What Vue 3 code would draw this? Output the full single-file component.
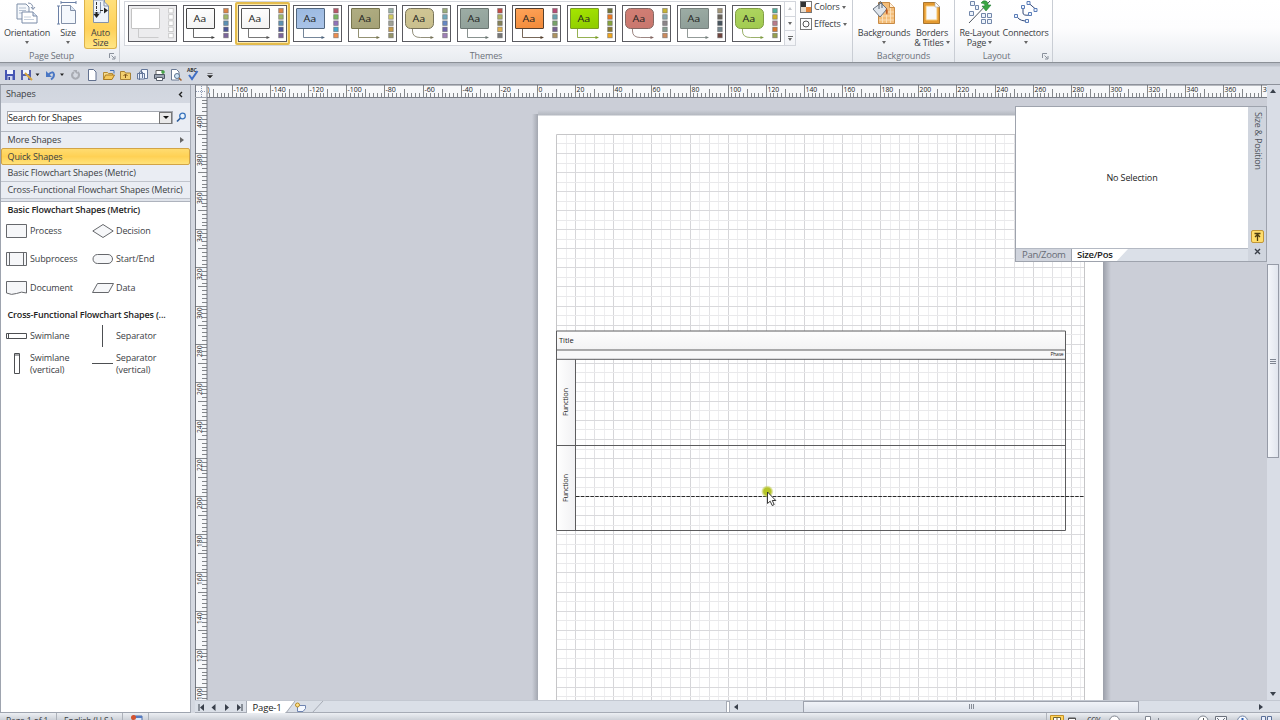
<template>
  <div class="window">
    <div class="ribbon">
      <div class="group pageSetup">
        <div class="tools">
          <div class="tool orientation">
            <svg width="22" height="26" viewBox="0 0 22 26">
              <path d="M1 4h9l3 3v12H1z" fill="#f5f8fc" stroke="#7f8fa8" />
              <path d="M3 8h7M3 10.500h7M3 13h7" stroke="#b4c0d0" />
              <path d="M6 12h11l4 4v7H6z" fill="#fff" stroke="#7a8ba8" />
              <path d="M17 12v4h4" fill="#dbe5f2" stroke="#7a8ba8" />
              <path d="M8 17h7M8 19.500h10" stroke="#c4cedc" />
              <path d="M12 3q5 0 5 6M15 7l2 2.500 2-2.500" fill="none" stroke="#8190aa" />
            </svg>
            <span>Orientation</span><i class="caret"></i>
          </div>
          <div class="tool size">
            <svg width="22" height="26" viewBox="0 0 22 26">
              <path d="M4.500 5.500h9l5 5v13h-14z" fill="#f4f8fd" stroke="#8290a8" />
              <path d="M13.500 5.500v5h5" fill="#dce6f3" stroke="#8290a8" />
              <path d="M4 2.500h15M4 1v3M19 1v3M1.500 6v18M0 6h3M0 24h3" stroke="#6b80a6" fill="none" />
            </svg>
            <span>Size</span><i class="caret"></i>
          </div>
          <div class="tool auto">
            <svg width="20" height="26" viewBox="0 0 20 26">
              <path d="M2.500 0v22.500h15V6l-4-4V0z" fill="#eef3fa" stroke="#8492aa" />
              <path d="M9.500 2v11M9.500 13H2M13 1v5h4" stroke="#8492aa" fill="none" />
              <path d="M5.500 2v9M9 10.500h7" stroke="#333" stroke-dasharray="3 1" />
              <path d="M2.500 14h6l-3 4zM13 7.500v6l4-3zM4.500 12h2v2h-2z" fill="#222" />
            </svg>
            <span>Auto</span><span>Size</span>
          </div>
        </div>
        <div class="groupName">Page Setup</div>
        <svg class="launcher" width="7" height="7"><path d="M.5 5V.5H5M2.500 2.500l3 3M6 3v3H3" fill="none" stroke="#8a919c" /></svg>
      </div>

      <div class="group themes">
        <div class="gallery">
          <div v-for="(t, i) in themes" :key="i" class="theme" :class="{ picked: i === 2 }">
            <svg width="49" height="37" viewBox="0 0 49 37">
              <defs>
                <linearGradient :id="'fill' + i" x1="0" y1="0" x2="0.300" y2="1">
                  <stop offset="0" :stop-color="t.top" />
                  <stop offset="1" :stop-color="t.bottom" />
                </linearGradient>
              </defs>
              <rect x="0.500" y="0.500" width="48" height="36" :fill="i ? '#fff' : '#ececee'" stroke="#5a5a60" />
              <rect x="3.500" y="3.500" width="28" height="20" :rx="t.round ? 5 : 0.500" :fill="`url(#fill${i})`" :stroke="t.line" />
              <path :d="t.round ? 'M10.500 24v2q0 6.500 8 6.500h12' : 'M10.500 24v8.500h20'" fill="none" :stroke="t.line" stroke-width="0.800" />
              <path v-if="i" d="M28.500 31l3.500 1.500-3.500 1.500z" :fill="t.line" />
              <text v-if="i" x="10.500" y="17" class="aa" textLength="12.500" lengthAdjust="spacingAndGlyphs">Aa</text>
              <rect v-for="(c, k) in t.swatches" :key="k" x="40.700" :y="3.500 + k * 6.200" width="4.500" height="4.500" :fill="c" :stroke="i ? '#666a' : '#c4c4c4'" stroke-width="0.800" />
            </svg>
          </div>
        </div>
        <div class="galleryNav">
          <div><i class="up"></i></div>
          <div><i class="caret"></i></div>
          <div class="more"><b></b><i class="caret"></i></div>
        </div>
        <div class="themeOptions">
          <div class="option">
            <svg width="12" height="12"><rect x="0.500" y="0.500" width="11" height="11" fill="#fff" stroke="#777" /><path d="M1 1h5v5H1z" fill="#333" /><path d="M6 6h5v5H6z" fill="#e58436" /><path d="M1 6h5v5H1z" fill="#e9dccb" /></svg>
            <span>Colors</span><i class="caret"></i>
          </div>
          <div class="option">
            <svg width="12" height="12"><rect x="0.500" y="0.500" width="11" height="11" fill="#fff" stroke="#777" /><circle cx="6" cy="6" r="3" fill="#fff" stroke="#555" /></svg>
            <span>Effects</span><i class="caret"></i>
          </div>
        </div>
        <div class="groupName">Themes</div>
      </div>

      <div class="group backgrounds">
        <div class="tools">
          <div class="tool bg">
            <svg width="24" height="26" viewBox="0 0 24 26">
              <path d="M6.500 2.500h11l5 5v16h-16z" fill="#f3bd79" stroke="#c98b45" />
              <path d="M7 12h15M7 16h15M7 20h15M10.500 8v15M14.500 8v15M18.500 8v15" stroke="#fbe3c2" stroke-width="0.800" />
              <path d="M17.500 2.500v5h5" fill="#fff0dc" stroke="#c98b45" />
              <path d="M1 9l8-6 6 6-7 8z" fill="#dfe5ec" stroke="#66717f" />
              <path d="M7 9V3q1-3 3 0v5" fill="none" stroke="#59626e" />
              <path d="M14 8q3 2 1 7-2-2-1-7z" fill="#bd5a22" />
            </svg>
            <span>Backgrounds</span><i class="caret"></i>
          </div>
          <div class="tool bt">
            <svg width="20" height="26" viewBox="0 0 20 26">
              <path d="M1.500 2.500h12l4 4v17h-16z" fill="#e49a31" stroke="#a8752f" />
              <path d="M4 6h11v14H4z" fill="#f8faff" stroke="#f7c977" />
              <path d="M13 2v5h5z" fill="#fff" stroke="#a8a8a8" stroke-width="0.600" />
            </svg>
            <span>Borders</span><span class="inline">&amp; Titles <i class="caret"></i></span>
          </div>
        </div>
        <div class="groupName">Backgrounds</div>
      </div>

      <div class="group layout">
        <div class="tools">
          <div class="tool relayout">
            <svg width="26" height="26" viewBox="0 0 26 26">
              <path d="M2 23L23 1" stroke="#4d555f" />
              <path d="M3.500 1.500h4v4h-4zM8.500 5.500h3v4h-3zM2.500 11.500h4v4h-4zM14.500 13.500h4v4h-4zM20.500 13.500h4v4h-4zM14.500 19.500h4v4h-4zM20.500 19.500h4v4h-4z" fill="#edf3fb" stroke="#7287aa" />
              <path d="M16 1q5-1 5 4h3l-5 6-4-5h3q0-3-4-3z" fill="#39a543" stroke="#237c32" stroke-width="0.600" />
            </svg>
            <span>Re-Layout</span><span class="inline">Page <i class="caret"></i></span>
          </div>
          <div class="tool conn">
            <svg width="26" height="26" viewBox="0 0 26 26">
              <path d="M15.500 3l7 6M10 7v6q0 3 7 2v-3M4 15q0 5 8 6" fill="none" stroke="#344a78" />
              <path d="M14 1.500h3v3h-3zM21 8.500h3v3h-3zM8.500 5.500h3v3h-3zM15.500 12.500h3v3h-3zM1.500 14.500h3v3h-3zM12.500 19.500h3v3h-3z" fill="#eef5ff" stroke="#5b7db7" />
            </svg>
            <span>Connectors</span><i class="caret"></i>
          </div>
        </div>
        <div class="groupName">Layout</div>
        <svg class="launcher" width="7" height="7"><path d="M.5 5V.5H5M2.500 2.500l3 3M6 3v3H3" fill="none" stroke="#8a919c" /></svg>
      </div>
    </div>

    <div class="quickAccess">
      <svg width="216" height="16" viewBox="0 0 216 16">
        <!-- save, save as -->
        <path d="M5 3h10v10H5z" fill="#4656b4" /><path d="M7 3h6v4H7z" fill="#f2f5ff" /><path d="M7.500 9h5v4h-5z" fill="#cfd6ee" /><path d="M8.500 10h1.500v3H8.500z" fill="#333f88" />
        <path d="M21 3h10v10H21z" fill="#5560ad" /><path d="M23 3h6v4h-6z" fill="#f2f5ff" /><path d="M23 9h5v4h-5z" fill="#d5dbee" /><path d="M25 6l7 7" stroke="#d8a43c" stroke-width="2" />
        <path d="M35.500 6.500h4l-2 2.500zM60 6.500h4l-2 2.500z" fill="#222" />
        <!-- undo, repeat -->
        <path d="M48 8q5-5 6-.5 0 3-3 5" fill="none" stroke="#4a77c4" stroke-width="2" /><path d="M46 4v6h6z" fill="#4a77c4" />
        <path d="M74 5q-3 2-1.500 5 3 3.500 6 0 1.500-3-1-5" fill="none" stroke="#a9acb3" stroke-width="2" /><path d="M73 3h4v4z" fill="#a9acb3" />
        <!-- new, open, folder up -->
        <path d="M88.500 2.500h5l2.500 2.500v8.500h-7.500z" fill="#fff" stroke="#62718f" />
        <path d="M103.500 12.500v-7h4l1 1h4v2" fill="#f8dc8c" stroke="#b48a34" /><path d="M103.500 12.500l2-4.500h9l-2.500 4.500z" fill="#f6c95b" stroke="#a97b25" /><path d="M110 3.500h4v3" stroke="#4472b8" fill="none" />
        <path d="M120.500 12.500v-8h4l1 1.500h5v6.500z" fill="#f3cf6e" stroke="#a98336" /><path d="M125.500 11V7.500M123.500 9l2-2 2 2" stroke="#7a4f16" fill="none" />
        <!-- mail, print, preview -->
        <path d="M141.500 2.500h6v9h-6z" fill="#f7faff" stroke="#64779a" /><path d="M137.500 6.500h7v5.500h-7z" fill="#e9effa" stroke="#64779a" /><path d="M139.500 13V5q1.500-2.500 3 0v6" fill="none" stroke="#64779a" />
        <path d="M156 3.500h7v4h-7z" fill="#fff" stroke="#666" /><path d="M154.500 7.500h10v4h-10z" fill="#9da5b3" stroke="#4e5663" /><path d="M156.500 10.500h6v3h-6z" fill="#fff" stroke="#59616d" /><circle cx="163" cy="5" r="1.800" fill="#46a548" />
        <path d="M171.500 2.500h5l2.500 2.500v8h-7.500z" fill="#fff" stroke="#6a7a94" /><circle cx="177" cy="9" r="2.500" fill="#cfe5f8" stroke="#5d738f" /><path d="M179 11l2.500 2.500" stroke="#a2612c" stroke-width="1.500" />
        <!-- spelling -->
        <text x="187" y="4.500" font-size="5" font-weight="700" fill="#333">ABC</text><path d="M189 8l3 4 5.500-8" fill="none" stroke="#3f6fc5" stroke-width="2" />
        <path d="M207.500 6.500h5M207.500 8.500h5l-2.500 2.500z" stroke="#333" stroke-width="0.600" fill="#222" />
      </svg>
    </div>

    <div class="main">
      <aside class="shapes">
        <div class="shapesHead"><span>Shapes</span><svg width="5" height="7"><path d="M4 1L1.500 3.500 4 6" fill="none" stroke="#222" stroke-width="1.400" /></svg></div>
        <div class="searchRow">
          <div class="search"><span>Search for Shapes</span><b><i class="caret"></i></b></div>
          <svg width="11" height="11"><circle cx="6.500" cy="4" r="2.800" fill="#e8f3fd" stroke="#3a74bd" stroke-width="1.300" /><path d="M4.500 6L1 9.500" stroke="#2f5f9e" stroke-width="1.700" /></svg>
        </div>
        <div class="stencil more"><span>More Shapes</span><i class="right"></i></div>
        <div class="stencil quick"><span>Quick Shapes</span></div>
        <div class="stencil"><span>Basic Flowchart Shapes (Metric)</span></div>
        <div class="stencil"><span>Cross-Functional Flowchart Shapes (Metric)</span></div>
        <div class="splitter"></div>
        <div class="masters">
          <h2>Basic Flowchart Shapes (Metric)</h2>
          <div class="grid basic">
            <div v-for="m in basic" :key="m.name" class="master">
              <svg width="22" height="22" viewBox="0 0 22 22"><path :d="m.d" fill="#f6f7f9" stroke="#66686c" /></svg>
              <span>{{ m.name }}</span>
            </div>
          </div>
          <h2 class="cross">Cross-Functional Flowchart Shapes (...</h2>
          <div class="grid functional">
            <div v-for="m in functional" :key="m.name" class="master">
              <svg width="22" height="22" viewBox="0 0 22 22"><path :d="m.d" fill="#fff" stroke="#4d4f52" /></svg>
              <span>{{ m.name }}</span>
            </div>
          </div>
        </div>
      </aside>

      <section class="editor">
        <div class="drawing">
          <svg class="canvas" width="1072" height="616" viewBox="195 84 1072 616">
            <defs>
              <linearGradient id="band" x1="0" y1="0" x2="0" y2="1"><stop offset="0" stop-color="#fdfdfd" /><stop offset="1" stop-color="#f3f3f4" /></linearGradient>
              <linearGradient id="lane" x1="0" y1="0" x2="1" y2="0"><stop offset="0" stop-color="#fff" /><stop offset="1" stop-color="#f1f1f3" /></linearGradient>
              <linearGradient id="shadeL" x1="0" y1="0" x2="1" y2="0"><stop offset="0" stop-color="#cbced7" /><stop offset="1" stop-color="#a3a7b0" /></linearGradient>
              <linearGradient id="shadeR" x1="0" y1="0" x2="1" y2="0"><stop offset="0" stop-color="#9b9fa9" /><stop offset="1" stop-color="#cbced7" /></linearGradient>
              <linearGradient id="shadeT" x1="0" y1="0" x2="0" y2="1"><stop offset="0" stop-color="#cbced7" /><stop offset="1" stop-color="#b0b4bc" /></linearGradient>
              <radialGradient id="click"><stop offset="0" stop-color="#b7c81e" /><stop offset="0.600" stop-color="#b5c42c" /><stop offset="1" stop-color="#c7d060" stop-opacity="0.200" /></radialGradient>
            </defs>
            <rect x="207" y="97" width="1060" height="603" fill="#cbced7" />
            <rect x="538" y="110" width="565" height="6" fill="url(#shadeT)" />
            <rect x="532" y="114" width="6" height="586" fill="url(#shadeL)" />
            <rect x="1103" y="117" width="8" height="583" fill="url(#shadeR)" />
            <rect x="538" y="115.500" width="565" height="585" fill="#fff" />
            <g stroke-width="1">
              <path v-for="g in gridX" :key="'x' + g.p" :d="`M${g.p} 134V700`" :stroke="g.c" />
              <path v-for="g in gridY" :key="'y' + g.p" :d="`M556 ${g.p}H1084`" :stroke="g.c" />
              <path d="M556.500 700V134.500H1084.500V700" fill="none" stroke="#c6c6c8" />
            </g>
            <!-- swimlane container -->
            <rect x="556.500" y="331" width="509" height="19" fill="url(#band)" />
            <rect x="556.500" y="350" width="509" height="9" fill="#f8f8f9" />
            <rect x="556.500" y="359" width="19" height="171.500" fill="url(#lane)" />
            <path d="M556.500 331H1065.500V530.500H556.500zM556.500 350H1065.500M556.500 359.300H1065.500M556.500 445.500H1065.500M575.500 359.500V530.500" fill="none" stroke="#5c5c5e" />
            <path d="M576 496.500H1084" stroke="#2a2a2a" stroke-dasharray="3.500 1.300" />
            <text x="559" y="342.500" font-size="7.500" textLength="14.500" fill="#222">Title</text>
            <text x="1050.500" y="356" font-size="5" textLength="13" fill="#222">Phase</text>
            <text transform="translate(568 416) rotate(-90)" font-size="7.500" textLength="28" fill="#222">Function</text>
            <text transform="translate(568 502) rotate(-90)" font-size="7.500" textLength="28" fill="#222">Function</text>
            <circle cx="767.300" cy="491.500" r="6" fill="url(#click)" />
            <path d="M767.500 492v11.500l2.700-2.300 2 4.300 2-.9-1.900-4.100h3.500z" fill="#fff" stroke="#222" stroke-width="0.900" />

            <!-- rulers -->
            <rect x="195" y="84" width="12" height="616" fill="#f7f8fa" />
            <rect x="195" y="85" width="1072" height="12" fill="#f7f8fa" />
            <path d="M195 85H1267M207 97.500H1267M195.500 85V700M207 85V700" stroke="#777b84" />
            <path :d="ticksX" stroke="#66696f" stroke-width="0.800" />
            <path :d="ticksY" stroke="#66696f" stroke-width="0.800" />
            <path d="M196 91.500H206M201.500 86V97" stroke="#8d9bb5" stroke-dasharray="1 1" />
            <path d="M195 97.500h12" stroke="#a0a5ae" />
            <text v-for="l in labelsX" :key="'lx' + l.n" :x="l.p" y="91.500" class="rulerText" :textLength="l.w" lengthAdjust="spacingAndGlyphs">{{ l.n }}</text>
            <text v-for="l in labelsY" :key="'ly' + l.n" :transform="`translate(201.500 ${l.p}) rotate(-90)`" class="rulerText" textLength="11.500" lengthAdjust="spacingAndGlyphs">{{ l.n }}</text>
            <text x="207.500" y="91.500" class="rulerText">)</text>
            <text x="1262.800" y="91.500" class="rulerText">3</text>
          </svg>

          <div class="sizePos">
            <div class="sizeBody">
              <div class="empty">No Selection</div>
              <div class="paneTabs">
                <span class="pan">Pan/Zoom</span>
                <span class="pos">Size/Pos</span>
              </div>
            </div>
            <div class="sizeSide">
              <span>Size &amp; Position</span>
              <div class="pin"><svg width="9" height="9"><path d="M4.500 9V3M2 5l2.500-2.500L7 5M1.500 1.500h6" fill="none" stroke="#4d3d12" stroke-width="1.300" /></svg></div>
              <svg width="7" height="7"><path d="M1 1l5 5M6 1L1 6" stroke="#3a3f48" stroke-width="1.400" /></svg>
            </div>
          </div>
        </div>

        <div class="vScroll">
          <i class="up"></i>
          <div class="vThumb"><b></b><b></b><b></b></div>
          <i class="caret"></i>
        </div>

        <div class="pageBar">
          <svg width="132" height="13" viewBox="0 0 132 13">
            <path d="M9 3v7l-4-3.500zM20.500 3v7l-4-3.500zM30 3v7l4-3.500zM42 3v7l4-3.500z" fill="#39404b" />
            <path d="M4 3v7M47 3v7" stroke="#39404b" />
            <path d="M51.500 0v12H90l10-12z" fill="#fff" /><path d="M51.500 0v12M91 12l9-12M117 12l11-12" fill="none" stroke="#a6abb5" />
            <text x="57.500" y="9.500" font-size="9.500" font-weight="500" textLength="29" fill="#222">Page-1</text>
            <path d="M102.500 4.500h8v3l-2.500 3h-5.500z" fill="#f4f8ff" stroke="#6f84b1" /><circle cx="102.500" cy="4" r="2" fill="#ffe28c" stroke="#b98b23" />
          </svg>
          <div class="barSplit"></div>
          <div class="hScroll">
            <i class="left"></i>
            <div class="hThumb"><b></b><b></b><b></b></div>
            <i class="right"></i>
          </div>
        </div>
      </section>
    </div>

    <div class="status">
      <span class="pages">Page 1 of 1</span>
      <span class="lang">English (U.S.)</span>
      <span class="macro"><svg width="13" height="8"><path d="M3 3h9v6H3z" fill="#dce7f7" stroke="#506fa8" /><path d="M3 3h9v2H3z" fill="#547bc2" /><circle cx="3.500" cy="4.500" r="2.500" fill="#d4532e" /></svg></span>
      <svg class="views" width="234" height="7" viewBox="0 0 234 7">
        <path d="M.5 0v7" stroke="#b0b4bc" />
        <path d="M4.500 7V2.500h13V7" fill="#ffd35c" stroke="#c49229" /><path d="M7.500 7V4.500h7V7M11 5v3" fill="#fff" stroke="#6f6535" />
        <path d="M22.500 7V5h7v2M22 5.500h8" fill="#fff" stroke="#555" />
        <text x="41" y="11" font-size="8.500" textLength="15" fill="#333">66%</text>
        <circle cx="68.500" cy="8" r="5" fill="#fff" stroke="#7f858f" />
        <path d="M99.500 7V3.500h5V7M112.500 5v2" fill="#fff" stroke="#7f858f" />
        <circle cx="157" cy="8" r="5" fill="#fff" stroke="#7f858f" /><path d="M157.500 5v3" stroke="#555" />
        <path d="M169.500 7V3.500h11V7M171 5l3 3M179 5l-3 3" fill="#f4f6fa" stroke="#6b717c" />
        <circle cx="196.500" cy="8" r="5" fill="#f4f7fd" stroke="#7586a5" /><path d="M196.500 5v3" stroke="#2d61ae" stroke-width="2" />
        <path d="M215.500 7V3.500h4V7M221.500 7V3.500h4V7" fill="#e8eefb" stroke="#5a7099" />
      </svg>
    </div>
  </div>
</template>

<script setup>
const bright = ['#dc8548', '#a1b86b', '#5d91b3', '#4b5598', '#7c659c']

const themes = [
  { top: '#fff', bottom: '#fff', line: '#c3c3c3', swatches: ['#fff', '#fff', '#fff', '#fff', '#fff'] },
  { top: '#fff', bottom: '#f3f3f3', line: '#444', swatches: bright },
  { top: '#fff', bottom: '#f3f3f3', line: '#555', swatches: bright },
  { top: '#9bb9e0', bottom: '#a9c3e8', line: '#52677f', swatches: ['#b95769', '#78b661', '#9073b8', '#45a9cd', '#ef8d4d'] },
  { top: '#b0ad82', bottom: '#a6a378', line: '#77754f', swatches: ['#9bb5a9', '#d3cb62', '#9fa297', '#c89c4a', '#96956b'] },
  { top: '#d1c796', bottom: '#c9bf8d', line: '#77735a', round: true, swatches: ['#9bae7c', '#71a9bd', '#6688c3', '#7164ad', '#a07fb8'] },
  { top: '#9dada5', bottom: '#91a19a', line: '#6b7672', swatches: ['#c34c45', '#b0b264', '#858158', '#e0b04f', '#777'] },
  { top: '#ffa45a', bottom: '#f38d3d', line: '#54402f', swatches: ['#b84c75', '#6aa1b0', '#77a269', '#756092', '#ae9460'] },
  { top: '#a5e600', bottom: '#91cf00', line: '#7a9d25', swatches: ['#707539', '#ed7920', '#86a33b', '#8a7832', '#f0a51c'] },
  { top: '#d27f75', bottom: '#c9776e', line: '#846863', round: true, swatches: ['#c8b436', '#87a8b0', '#8c8589', '#87a094', '#cc8b5e'] },
  { top: '#9dada5', bottom: '#8e9e98', line: '#77817e', swatches: ['#a39777', '#69645c', '#47535d', '#73868e', '#71443e'] },
  { top: '#afd662', bottom: '#a2cb51', line: '#819d45', round: true, swatches: ['#51b09c', '#d0b32b', '#b87d8b', '#d9792e', '#96a04e'] },
]

const basic = [
  { name: 'Process', d: 'M.5 4.500h20v13H.5z' },
  { name: 'Decision', d: 'M.8 11L11 4.500 21.200 11 11 17.500z' },
  { name: 'Subprocess', d: 'M.5 4.500h20v13H.5zM3.500 4.500v13M17.500 4.500v13' },
  { name: 'Start/End', d: 'M5.500 6.500h10.500a4.500 4.500 0 010 9H5.500a4.500 4.500 0 010-9z' },
  { name: 'Document', d: 'M.5 4.500h20v11.500q-5-2-10 .5-5 2-10-.5z' },
  { name: 'Data', d: 'M5.500 6.500h16l-5 9h-16z' },
]

const functional = [
  { name: 'Swimlane', d: 'M.5 8.500h20v5H.5zM2.500 8.500v5' },
  { name: 'Separator', d: 'M10.500 0v22' },
  { name: 'Swimlane (vertical)', d: 'M8.500 .5h5v20h-5zM8.500 2h5' },
  { name: 'Separator (vertical)', d: 'M0 10.500h21' },
]

// pixels for one millimetre at the current zoom
const mm = 1.9065
const zeroX = 537.5
const zeroY = 115.4 + 400 * mm

const snap = (v) => Math.floor(v) + 0.5

const gridX = []
for (let n = 15; n <= 285; n += 5) {
  gridX.push({ p: snap(zeroX + n * mm), c: n % 20 === 0 ? '#d6d6d9' : n % 10 === 0 ? '#e1e1e4' : '#eeeef0' })
}
const gridY = []
for (let n = 385; n >= 95; n -= 5) {
  gridY.push({ p: snap(zeroY - n * mm), c: n % 10 === 0 ? '#d9d9dc' : '#e9e9eb' })
}

let ticksX = ''
const labelsX = []
for (let n = -172; n <= 380; n += 2) {
  const p = snap(zeroX + n * mm)
  ticksX += `M${p} 97V${n % 20 === 0 ? 85 : n % 10 === 0 ? 89 : 93}`
  if (n % 20 === 0 && n < 380) {
    const digits = String(Math.abs(n)).length
    labelsX.push({ n, p: p + 1, w: digits * 3.9 + (n < 0 ? 2.6 : 0) })
  }
}

let ticksY = ''
const labelsY = []
for (let n = 408; n >= 94; n -= 2) {
  const p = snap(zeroY - n * mm)
  ticksY += `M207 ${p}H${n % 20 === 0 ? 195 : n % 10 === 0 ? 198 : 202}`
  if (n % 20 === 0) {
    labelsY.push({ n, p: p + 12.5 })
  }
}
</script>

<style>
  body{
    margin: 0;
    overflow: hidden;
  }
</style>

<style scoped>
  .window{
    box-sizing: border-box;
    width: 1280px;
    height: 720px;
    display: flex;
    flex-direction: column;
    overflow: hidden;
    background: #d4d8e0;
    color: #3b3e44;
    font-family: "Open Sans", "Noto Sans", sans-serif;
    font-size: 9px;
    line-height: 10px;
    letter-spacing: -0.12px;
    white-space: nowrap;
  }
  .window *{
    box-sizing: border-box;
  }
  svg{
    display: block;
    flex: none;
  }
  .caret, .up, .left, .right{
    display: inline-block;
    width: 0;
    height: 0;
    flex: none;
    border: 2px solid transparent;
  }
  .caret{
    border-top: 3px solid #666;
    border-bottom: 0;
  }
  .up{
    border-bottom: 3px solid #555;
    border-top: 0;
  }
  .left{
    border-width: 3.5px 4px 3.5px 0;
    border-right-color: #39404b;
  }
  .right{
    border-width: 3.5px 0 3.5px 4px;
    border-left-color: #39404b;
  }

  /* ribbon */
  .ribbon{
    height: 63px;
    flex: none;
    display: flex;
    background: linear-gradient(#fff 0, #fdfdfe 45%, #eceff3 90%, #e8ebf0 100%);
    border-bottom: 1px solid #8b9097;
  }
  .group{
    position: relative;
    height: 62px;
    border-right: 1px solid #c9cdd4;
  }
  .pageSetup{
    width: 120px;
  }
  .themes{
    width: 733px;
    display: flex;
    padding: 1px 0 0 4px;
  }
  .backgrounds{
    width: 102px;
  }
  .layout{
    width: 98px;
  }
  .groupName{
    position: absolute;
    left: 0;
    right: 16px;
    bottom: 1px;
    text-align: center;
    color: #6d727b;
  }
  .pageSetup .groupName{
    letter-spacing: -0.2px;
  }
  .layout .groupName{
    right: 14px;
  }
  .themes .groupName{
    right: 0;
  }
  .backgrounds .groupName{
    right: 0;
  }
  .launcher{
    position: absolute;
    right: 3px;
    bottom: 2px;
  }
  .tools{
    display: flex;
    height: 49px;
  }
  .tool{
    display: flex;
    flex-direction: column;
    align-items: center;
    letter-spacing: -0.2px;
  }
  .tool svg{
    margin-bottom: 2px;
  }
  .tool .caret{
    margin-top: 3px;
  }
  .inline .caret{
    vertical-align: 2px;
    margin: 0;
  }
  .orientation{
    width: 54px;
  }
  .size{
    width: 28px;
  }
  .auto{
    width: 33px;
    margin-left: 2px;
    border: 1px solid #dcb24b;
    border-top: 0;
    border-radius: 0 0 3px 3px;
    background: linear-gradient(#ffe07c, #ffd15a 60%, #ffe584);
  }
  .bg{
    width: 62px;
  }
  .bt{
    width: 34px;
  }
  .relayout{
    width: 49px;
  }
  .conn{
    width: 43px;
  }
  .gallery{
    display: flex;
    width: 661px;
    height: 45px;
    border: 1px solid #d3d6dc;
    background: #fff;
  }
  .theme{
    width: 54.9px;
    height: 43px;
    padding: 3px 0 0 3px;
    flex: none;
    border-radius: 2px;
  }
  .theme.picked{
    padding: 1px 0 0 1px;
    border: 2px solid #e3bb4c;
    background: #fbe9ac;
  }
  .aa{
    font-size: 9.5px;
    fill: #222;
  }
  .galleryNav{
    width: 11px;
    height: 45px;
    display: flex;
    flex-direction: column;
    border: 1px solid #d3d6dc;
    border-left: 0;
  }
  .galleryNav div{
    flex: 1;
    display: flex;
    align-items: center;
    justify-content: center;
    border-bottom: 1px solid #d3d6dc;
  }
  .galleryNav div:last-child{
    border-bottom: 0;
  }
  .galleryNav .up{
    border-bottom-color: #c0c3c8;
  }
  .galleryNav .more{
    flex-direction: column;
    gap: 1px;
  }
  .more b{
    width: 5px;
    height: 1px;
    background: #666;
  }
  .themeOptions{
    padding-left: 4px;
    display: flex;
    flex-direction: column;
    gap: 5px;
    letter-spacing: -0.2px;
  }
  .option{
    display: flex;
    align-items: center;
    gap: 2px;
    height: 12px;
  }

  /* quick access */
  .quickAccess{
    height: 21px;
    flex: none;
    padding-top: 4px;
    background: linear-gradient(#b7bcc5 0, #c0c5ce 3px, #d4d8e0 4px);
  }

  /* shapes panel */
  .main{
    height: 629px;
    flex: none;
    display: flex;
    border-top: 1px solid #8e929b;
  }
  .shapes{
    width: 191px;
    margin-right: 4px;
    flex: none;
    background: #eaedf3;
    border-left: 1px solid #9ea4af;
    border-right: 1px solid #a5aab4;
    border-bottom: 1px solid #9ea4af;
    display: flex;
    flex-direction: column;
  }
  .shapesHead{
    height: 18px;
    display: flex;
    align-items: center;
    justify-content: space-between;
    padding: 0 7px 0 5px;
    background: linear-gradient(#d0d5de, #d4d8e1);
  }
  .searchRow{
    height: 29px;
    display: flex;
    align-items: center;
    gap: 3px;
    padding: 1px 0 0 6px;
    border-bottom: 1px solid #b2b7c0;
  }
  .search{
    width: 166px;
    height: 13px;
    display: flex;
    justify-content: space-between;
    align-items: center;
    border: 1px solid #a4a8b0;
    background: #fff;
    color: #222;
  }
  .search b{
    width: 13px;
    height: 12px;
    display: flex;
    align-items: center;
    justify-content: center;
    border: 1px solid #777;
    background: #e9e9e9;
  }
  .search .caret{
    border-width: 3px 3px 0;
    border-top-color: #111;
  }
  .stencil{
    height: 17px;
    display: flex;
    align-items: center;
    justify-content: space-between;
    padding: 0 6px 0 6.5px;
    border-bottom: 1px solid #c0c4cc;
  }
  .stencil.more{
    height: 16px;
    border-bottom: 0;
  }
  .stencil .right{
    border-width: 3px 0 3px 4px;
    border-left-color: #666;
  }
  .stencil.quick{
    height: 17px;
    padding-left: 5.5px;
    border: 1px solid #d2a447;
    border-radius: 2px;
    background: linear-gradient(#ffdc70, #ffd154 50%, #ffe27a);
  }
  .splitter{
    height: 3px;
    background: #dfe3ea;
    border-bottom: 1px solid #aeb3bd;
  }
  .masters{
    flex: 1;
    padding: 3px 0 0 5px;
    background: #fff;
  }
  h2{
    margin: 0 0 0 1.5px;
    height: 11px;
    font-size: 9px;
    line-height: 10px;
    font-weight: 600;
    color: #222;
    letter-spacing: -0.15px;
  }
  .grid{
    display: grid;
    grid-template-columns: 86px 90px;
  }
  .basic{
    grid-template-rows: 29px 28px 29px;
  }
  .cross{
    margin-top: 8px;
  }
  .functional{
    grid-template-rows: 28px 28px;
    align-items: center;
    padding-top: 1px;
  }
  .master{
    display: flex;
    align-items: center;
    gap: 2px;
  }
  .functional .master span{
    width: 45px;
    white-space: normal;
    line-height: 12px;
  }

  /* drawing window */
  .editor{
    width: 1085px;
    display: grid;
    grid-template-columns: 1072px 13px;
    grid-template-rows: 615px 13px;
  }
  .drawing{
    position: relative;
    overflow: hidden;
  }
  .canvas{
    margin-top: -1px;
  }
  .rulerText{
    font-size: 7.2px;
    letter-spacing: 0;
    fill: #1c1c1c;
  }
  .sizePos{
    position: absolute;
    left: 820px;
    top: 21px;
    width: 252px;
    height: 156px;
    display: flex;
    border: 1px solid #9ea3ad;
    background: #d0d5de;
  }
  .sizeBody{
    width: 232px;
    display: flex;
    flex-direction: column;
  }
  .empty{
    height: 141px;
    display: flex;
    align-items: center;
    justify-content: center;
    background: #fff;
    color: #222;
  }
  .paneTabs{
    height: 13px;
    display: flex;
    border-top: 1px solid #b4b9c3;
    background: #dbe0e8;
    font-size: 9.5px;
    line-height: 12px;
  }
  .pan{
    width: 56px;
    padding-left: 6px;
    background: #d0d4dd;
    color: #666b75;
    letter-spacing: -0.3px;
    border-right: 1px solid #9ea3ad;
  }
  .pos{
    width: 56px;
    padding-left: 5px;
    background: #fff;
    color: #222;
    font-weight: 600;
    letter-spacing: -0.3px;
    clip-path: polygon(0 0, 100% 0, 80% 100%, 0 100%);
  }
  .sizeSide{
    width: 18px;
    display: flex;
    flex-direction: column;
    align-items: center;
    padding: 5px 0 0 1px;
  }
  .sizeSide span{
    height: 118px;
    writing-mode: vertical-rl;
    color: #515660;
    letter-spacing: -0.25px;
  }
  .pin{
    width: 13px;
    height: 13px;
    margin-bottom: 5px;
    display: flex;
    align-items: center;
    justify-content: center;
    border: 1px solid #c0963a;
    border-radius: 2px;
    background: #ffdd6b;
  }
  .vScroll{
    display: flex;
    flex-direction: column;
    align-items: center;
    padding: 4px 1px 4px 0;
    background: #d9dde6;
  }
  .vScroll .up{
    border-width: 0 3px 4px;
    margin-bottom: 171px;
    border-bottom-color: #39404b;
  }
  .vScroll .caret{
    margin-top: auto;
    border-width: 4px 3px 0;
    border-top-color: #39404b;
  }
  .vThumb{
    width: 12px;
    height: 194px;
    display: flex;
    flex-direction: column;
    align-items: center;
    justify-content: center;
    gap: 1px;
    border: 1px solid #969ba7;
    background: linear-gradient(90deg, #f4f6fa, #e1e5ee);
  }
  .vThumb b{
    width: 6px;
    height: 1px;
    background: #7f8591;
  }
  .pageBar{
    grid-column: 1 / 3;
    display: flex;
    background: #dadfe7;
    border-top: 1px solid #c3c8d1;
    border-bottom: 1px solid #a6abb5;
  }
  .barSplit{
    width: 4px;
    height: 12px;
    margin-left: 399px;
    border: 1px solid #a6abb5;
    background: #fff;
  }
  .hScroll{
    width: 537px;
    padding: 0 4px 0 4px;
    display: flex;
    align-items: center;
  }
  .hThumb{
    width: 336px;
    height: 12px;
    margin: 0 auto 0 65px;
    display: flex;
    align-items: center;
    justify-content: center;
    gap: 1px;
    border: 1px solid #9da2ad;
    background: linear-gradient(#f0f3f8, #dce1ea);
  }
  .hThumb b{
    width: 1px;
    height: 5px;
    background: #858b96;
  }

  /* status bar */
  .status{
    height: 7px;
    flex: none;
    display: flex;
    overflow: hidden;
    background: linear-gradient(#eceff3, #cdd1d8);
    font-size: 8.5px;
  }
  .status span{
    height: 7px;
    padding-top: 3px;
    border-right: 1px solid #adb2ba;
  }
  .pages{
    width: 57px;
    padding-left: 6px;
  }
  .lang{
    width: 66px;
    padding-left: 7px;
  }
  .status .macro{
    width: 26px;
    padding: 0 0 0 7px;
  }
  .views{
    margin-left: auto;
  }
</style>
